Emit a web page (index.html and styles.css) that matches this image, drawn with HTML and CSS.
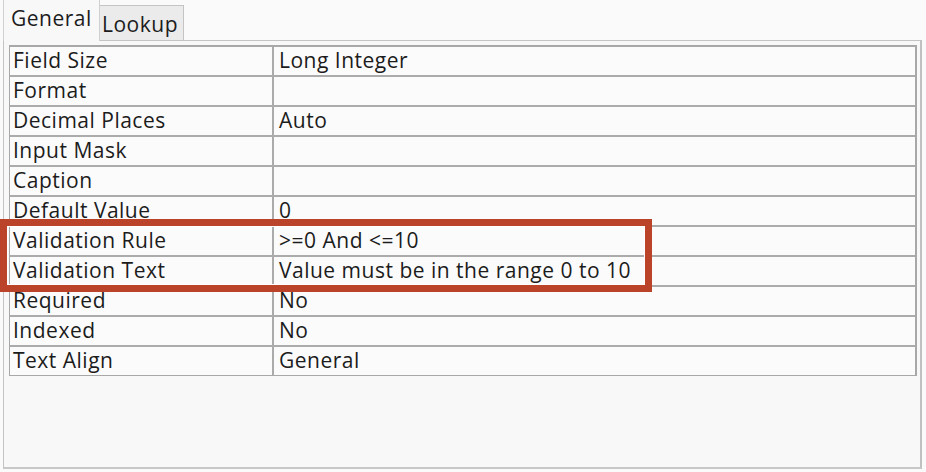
FILE: index.html
```html
<!DOCTYPE html>
<html>
<head>
<meta charset="utf-8">
<link rel="stylesheet" href="styles.css">
</head>
<body>
<div class="screen">
  <div class="tabs">
    <div class="tab tab-active">General</div>
    <div class="tab tab-inactive">Lookup</div>
  </div>
  <div class="panel">
    <div class="grid">
      <div class="row"><div class="cell name">Field Size</div><div class="cell value">Long Integer</div></div>
      <div class="row"><div class="cell name">Format</div><div class="cell value"></div></div>
      <div class="row"><div class="cell name">Decimal Places</div><div class="cell value">Auto</div></div>
      <div class="row"><div class="cell name">Input Mask</div><div class="cell value"></div></div>
      <div class="row"><div class="cell name">Caption</div><div class="cell value"></div></div>
      <div class="row"><div class="cell name">Default Value</div><div class="cell value">0</div></div>
      <div class="row"><div class="cell name">Validation Rule</div><div class="cell value">&gt;=0 And &lt;=10</div></div>
      <div class="row"><div class="cell name">Validation Text</div><div class="cell value">Value must be in the range 0 to 10</div></div>
      <div class="row"><div class="cell name">Required</div><div class="cell value">No</div></div>
      <div class="row"><div class="cell name">Indexed</div><div class="cell value">No</div></div>
      <div class="row"><div class="cell name">Text Align</div><div class="cell value">General</div></div>
    </div>
  </div>
  <div class="highlight"></div>
</div>
</body>
</html>
```
FILE: styles.css
```css
html, body {
  margin: 0;
  padding: 0;
  background: #fafafa;
}
.screen {
  position: relative;
  width: 926px;
  height: 472px;
  overflow: hidden;
  font-family: "Open Sans", "Noto Sans", sans-serif;
  font-size: 21px;
  letter-spacing: 0.5px;
  color: #1c1c1c;
}
.tabs {
  display: flex;
  align-items: flex-end;
  height: 40px;
  padding-left: 3px;
}
.tab {
  box-sizing: border-box;
  display: flex;
  align-items: center;
}
.tab-active {
  position: relative;
  z-index: 2;
  width: 97px;
  height: 41px;
  margin-bottom: -1px;
  padding-left: 7px;
  padding-bottom: 6px;
  background: #f8f8f8;
  border-left: 1px solid #d0d0d0;
  border-right: 1px solid #d0d0d0;
}
.tab-inactive {
  width: 84px;
  height: 35px;
  padding-left: 2px;
  padding-top: 1px;
  background: #ebebeb;
  border: 1px solid #c4c4c4;
  border-bottom: none;
  border-left: none;
}
.panel {
  box-sizing: border-box;
  margin-left: 3px;
  width: 919px;
  height: 429px;
  padding: 4px 0 0 5px;
  background: #f8f8f8;
  border: 1px solid #c4c4c4;
  border-right: 2px solid #c0c0c0;
  border-bottom: 2px solid #c8c8c8;
}
.grid {
  width: 908px;
  box-sizing: border-box;
  border: 1px solid #a8a8a8;
  border-top: 2px solid #a8a8a8;
  border-right: 2px solid #a8a8a8;
  background: #fbfbfb;
}
.row {
  display: grid;
  grid-template-columns: 264px 1fr;
  height: 30px;
  box-sizing: border-box;
  border-bottom: 2px solid #ababab;
}
.row:last-child {
  border-bottom: none;
  height: 28px;
}
.cell {
  box-sizing: border-box;
  padding-left: 3px;
  line-height: 27px;
  white-space: nowrap;
}
.name {
  border-right: 2px solid #ababab;
}
.value {
  padding-left: 5px;
}
.highlight {
  position: absolute;
  left: 0;
  top: 219px;
  width: 652px;
  height: 73px;
  box-sizing: border-box;
  border: 7px solid #bb4329;
  box-shadow: inset 0 0 0 1px #ffffff;
}
```
